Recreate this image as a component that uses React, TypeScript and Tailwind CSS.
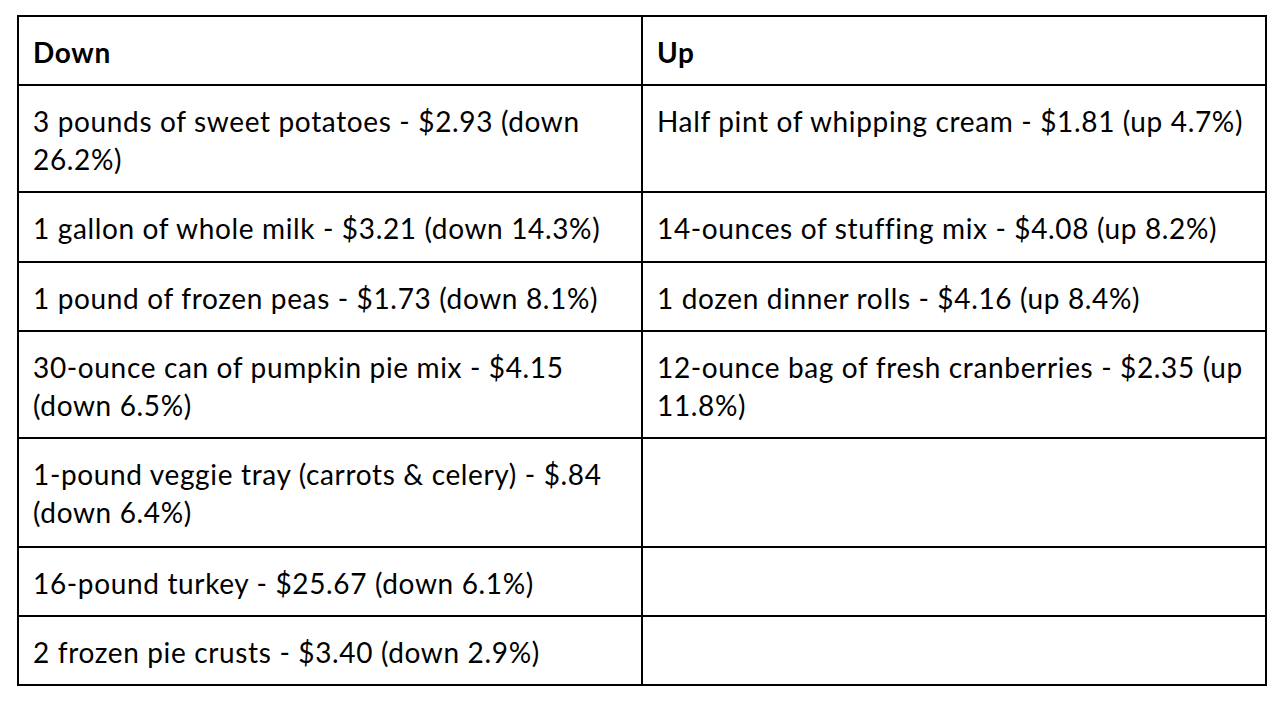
import React from "react";

const rows: [string, string, string][] = [
  ["3 pounds of sweet potatoes - $2.93 (down 26.2%)", "Half pint of whipping cream - $1.81 (up 4.7%)", "h-[107px]"],
  ["1 gallon of whole milk - $3.21 (down 14.3%)", "14-ounces of stuffing mix - $4.08 (up 8.2%)", "h-[70px]"],
  ["1 pound of frozen peas - $1.73 (down 8.1%)", "1 dozen dinner rolls - $4.16 (up 8.4%)", "h-[69px]"],
  ["30-ounce can of pumpkin pie mix - $4.15 (down 6.5%)", "12-ounce bag of fresh cranberries - $2.35 (up 11.8%)", "h-[107px]"],
  ["1-pound veggie tray (carrots & celery) - $.84 (down 6.4%)", "", "h-[109px]"],
  ["16-pound turkey - $25.67 (down 6.1%)", "", "h-[69px]"],
  ["2 frozen pie crusts - $3.40 (down 2.9%)", "", "h-[69px]"],
];

export default function App() {
  const cell =
    "border-2 border-black pl-[14px] pr-[12px] pt-[16px] pb-[10px] text-[28px] leading-[38px] tracking-[0.65px] align-top text-black";
  return (
    <div
      className="w-[1284px] h-[704px] bg-white pt-[15px] pl-[17px]"
      style={{ fontFamily: "Lato, 'Open Sans', sans-serif" }}
    >
      <table className="border-collapse table-fixed w-[1248px]">
        <colgroup>
          <col className="w-[624px]" />
          <col className="w-[624px]" />
        </colgroup>
        <tbody>
          <tr className="h-[69px]">
            <td className={cell + " font-bold"}>Down</td>
            <td className={cell + " font-bold"}>Up</td>
          </tr>
          {rows.map(([a, b, h], i) => (
            <tr key={i} className={h}>
              <td className={cell}>{a}</td>
              <td className={cell}>{b}</td>
            </tr>
          ))}
        </tbody>
      </table>
    </div>
  );
}
